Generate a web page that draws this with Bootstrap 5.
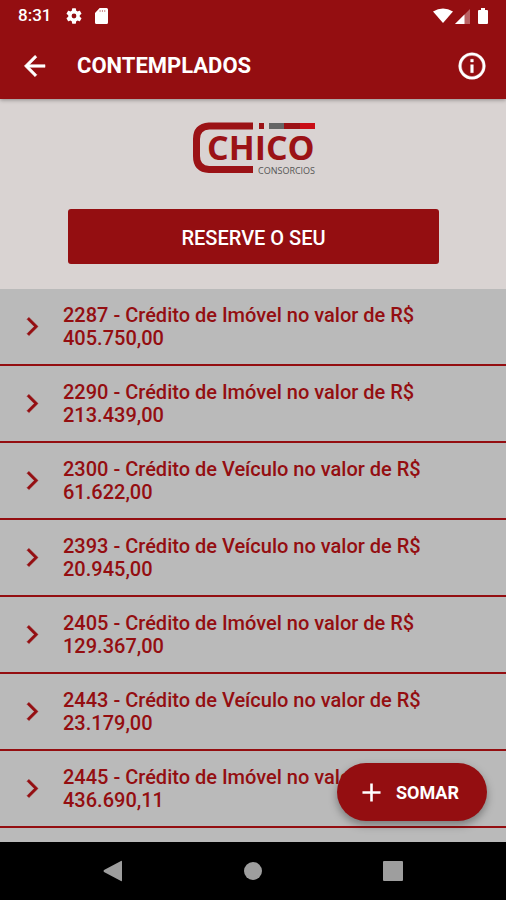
<!DOCTYPE html>
<html lang="pt-BR">
<head>
<meta charset="utf-8">
<meta name="viewport" content="width=device-width, initial-scale=1">
<title>Contemplados</title>
<link href="https://cdn.jsdelivr.net/npm/bootstrap@5.3.0/dist/css/bootstrap.min.css" rel="stylesheet">
<style>
  :root { --brand: #940e11; }
  body { font-family: Roboto, "Liberation Sans", sans-serif; background: #bababa; }
  svg { display: block; flex: none; }
  .app-header { background: var(--brand); color: #fff; box-shadow: 0 1px 4px rgba(0,0,0,.35); z-index: 1; }
  .status-bar { height: 32px; padding: 0 16px 0 18px; font-size: 17px; font-weight: 500; }
  .status-bar .system-icons { gap: 13px; margin-left: 15px; }
  .app-bar { height: 67px; padding: 0 18px 0 19px; }
  .app-bar h1 { font-size: 22px; line-height: 28px; font-weight: 700; margin-left: 26px; }
  .plain-btn { background: none; border: 0; color: inherit; padding: 0; }
  .hero { background: #d9d3d2; padding: 20px 67px 25px 68px; }
  .hero svg { margin-bottom: 33px; }
  .reserve-btn, .reserve-btn:hover { background: var(--brand); color: #fff; font-size: 20px; font-weight: 500; line-height: 24px; padding: 17px 16px 14px; border: 0; border-radius: 3px; }
  .list-group > .quota, .list-group > .quota:last-child { background: #bababa; color: var(--brand); font-size: 20px; font-weight: 500; line-height: 23px; padding: 15px 80px 14px 16px; gap: 16px; border: 0; border-bottom: 2px solid var(--brand); }
  .quota svg { stroke: currentColor; stroke-width: .5; margin-bottom: 2px; }
  .sum-btn, .sum-btn:hover { right: 19px; bottom: 21px; height: 58px; padding: 0 28px 0 19px; gap: 9px; background: var(--brand); color: #fff; font-size: 18px; font-weight: 700; border: 0; box-shadow: 0 4px 8px rgba(0,0,0,.35); }
  .system-nav { height: 58px; background: #000; color: #9e9e9e; padding: 0 42px; }
</style>
</head>
<body>
<div class="d-flex flex-column vh-100 overflow-hidden">
  <header class="app-header position-relative">
    <div class="status-bar d-flex align-items-center">
      <span>8:31</span>
      <div class="system-icons d-flex align-items-center">
        <svg width="16" height="16" viewBox="2 2 20 20" fill="currentColor" aria-hidden="true"><path d="M19.14 12.94c.04-.3.06-.61.06-.94s-.02-.64-.07-.94l2.03-1.58a.49.49 0 0 0 .12-.61l-1.92-3.32a.49.49 0 0 0-.59-.22l-2.39.96a7 7 0 0 0-1.62-.94l-.36-2.54A.48.48 0 0 0 13.92 2.4h-3.84a.48.48 0 0 0-.47.41l-.36 2.54c-.59.24-1.13.57-1.62.94l-2.39-.96a.48.48 0 0 0-.59.22L2.74 8.87a.48.48 0 0 0 .12.61l2.03 1.58c-.05.3-.09.63-.09.94s.02.64.07.94l-2.03 1.58a.49.49 0 0 0-.12.61l1.92 3.32c.12.22.37.29.59.22l2.39-.96c.5.38 1.03.7 1.62.94l.36 2.54c.05.24.24.41.48.41h3.84c.24 0 .44-.17.47-.41l.36-2.54a7 7 0 0 0 1.62-.94l2.39.96c.22.08.47 0 .59-.22l1.92-3.32a.48.48 0 0 0-.12-.61zM12 15a3 3 0 1 1 0-6 3 3 0 0 1 0 6z"/></svg>
        <svg width="13" height="16" viewBox="0 0 14 16" preserveAspectRatio="none" fill="currentColor" aria-hidden="true"><path d="M5 0h7.500a1.500 1.500 0 0 1 1.500 1.500v13a1.500 1.500 0 0 1-1.500 1.500h-11A1.500 1.500 0 0 1 0 14.500V5z"/><path d="M5.500 2v2M8 2v2M10.500 2v2" stroke="#940e11" stroke-opacity=".5"/></svg>
      </div>
      <svg class="ms-auto" width="58" height="18" viewBox="0 0 58 18" fill="currentColor" role="img" aria-label="Wi-Fi, sinal e bateria">
        <path d="M1 4.500Q11 -1.500 21 4.500L11 16z"/>
        <path d="M23 17 38 2v15z" opacity=".35"/><path d="M23 17 32.500 7.500V17z"/>
        <path d="M49 1h4v2h2a1 1 0 0 1 1 1v12a1 1 0 0 1-1 1h-8a1 1 0 0 1-1-1V4a1 1 0 0 1 1-1h2z"/>
      </svg>
    </div>
    <div class="app-bar d-flex align-items-center">
      <button type="button" class="plain-btn" aria-label="Voltar"><svg width="32" height="32" viewBox="0 0 24 24" fill="currentColor" stroke="currentColor" stroke-width=".4"><path d="M19.500 11H7.830l5.590-5.590L12 4l-8 8 8 8 1.410-1.410L7.830 13H19.500z"/></svg></button>
      <h1 class="mb-0">CONTEMPLADOS</h1>
      <button type="button" class="plain-btn ms-auto" aria-label="Informações"><svg width="32" height="32" viewBox="0 0 24 24" fill="currentColor" stroke="currentColor" stroke-width=".3"><path d="M11 7h2v2h-2zm0 4h2v6h-2zm1-9a10 10 0 1 0 0 20 10 10 0 0 0 0-20zm0 18a8 8 0 1 1 0-16 8 8 0 0 1 0 16z"/></svg></button>
    </div>
  </header>

  <section class="hero d-flex flex-column align-items-center">
    <svg width="125" height="57" viewBox="0 0 125 57" role="img" aria-label="Chico Consorcios">
      <path d="M62 7H18Q5.500 8 5.500 20V37Q5.500 50 18 50.500H62" fill="none" stroke="#9b1216" stroke-width="7"/>
      <path d="M68 4h5v6h-5z" fill="#9b1216"/>
      <path d="M78 4h15v6H78z" fill="#656565"/><path d="M93 4h16v6H93z" fill="#9b1216"/><path d="M109 4h15v6h-15z" fill="#c90d16"/>
      <text x="16" y="41" font-family="'Open Sans', sans-serif" font-size="34" font-weight="700" fill="#9b1216">CHICO</text>
      <text x="67" y="55" font-family="'Open Sans', sans-serif" font-size="9" fill="#555">CONSORCIOS</text>
    </svg>
    <button type="button" class="btn reserve-btn w-100">RESERVE O SEU</button>
  </section>

  <main class="flex-grow-1 position-relative overflow-hidden">
    <div class="list-group list-group-flush">
      <button type="button" class="quota list-group-item list-group-item-action d-flex align-items-center"><svg width="31" height="31" viewBox="0 0 24 24" fill="currentColor" aria-hidden="true"><path d="M10 5 8.590 6.410 14.170 12l-5.580 5.590L10 19l7-7z"/></svg><span>2287 - Crédito de Imóvel no valor de R$ 405.750,00</span></button>
      <button type="button" class="quota list-group-item list-group-item-action d-flex align-items-center"><svg width="31" height="31" viewBox="0 0 24 24" fill="currentColor" aria-hidden="true"><path d="M10 5 8.590 6.410 14.170 12l-5.580 5.590L10 19l7-7z"/></svg><span>2290 - Crédito de Imóvel no valor de R$ 213.439,00</span></button>
      <button type="button" class="quota list-group-item list-group-item-action d-flex align-items-center"><svg width="31" height="31" viewBox="0 0 24 24" fill="currentColor" aria-hidden="true"><path d="M10 5 8.590 6.410 14.170 12l-5.580 5.590L10 19l7-7z"/></svg><span>2300 - Crédito de Veículo no valor de R$ 61.622,00</span></button>
      <button type="button" class="quota list-group-item list-group-item-action d-flex align-items-center"><svg width="31" height="31" viewBox="0 0 24 24" fill="currentColor" aria-hidden="true"><path d="M10 5 8.590 6.410 14.170 12l-5.580 5.590L10 19l7-7z"/></svg><span>2393 - Crédito de Veículo no valor de R$ 20.945,00</span></button>
      <button type="button" class="quota list-group-item list-group-item-action d-flex align-items-center"><svg width="31" height="31" viewBox="0 0 24 24" fill="currentColor" aria-hidden="true"><path d="M10 5 8.590 6.410 14.170 12l-5.580 5.590L10 19l7-7z"/></svg><span>2405 - Crédito de Imóvel no valor de R$ 129.367,00</span></button>
      <button type="button" class="quota list-group-item list-group-item-action d-flex align-items-center"><svg width="31" height="31" viewBox="0 0 24 24" fill="currentColor" aria-hidden="true"><path d="M10 5 8.590 6.410 14.170 12l-5.580 5.590L10 19l7-7z"/></svg><span>2443 - Crédito de Veículo no valor de R$ 23.179,00</span></button>
      <button type="button" class="quota list-group-item list-group-item-action d-flex align-items-center"><svg width="31" height="31" viewBox="0 0 24 24" fill="currentColor" aria-hidden="true"><path d="M10 5 8.590 6.410 14.170 12l-5.580 5.590L10 19l7-7z"/></svg><span>2445 - Crédito de Imóvel no valor de R$ 436.690,11</span></button>
    </div>
    <button type="button" class="btn sum-btn rounded-pill position-absolute d-flex align-items-center"><svg width="31" height="31" viewBox="0 0 24 24" fill="currentColor" aria-hidden="true"><path d="M19 13h-6v6h-2v-6H5v-2h6V5h2v6h6z"/></svg>SOMAR</button>
  </main>

  <nav class="system-nav d-flex align-items-center justify-content-around" aria-label="Sistema">
    <button type="button" class="plain-btn" aria-label="Voltar"><svg width="20" height="22" viewBox="0 0 20 22" fill="currentColor"><path d="M18 1Q19 0 19 2V20Q19 22 18 21L1 12Q0 11 1 10z"/></svg></button>
    <button type="button" class="plain-btn" aria-label="Início"><svg width="18" height="18" viewBox="0 0 18 18" fill="currentColor"><circle cx="9" cy="9" r="9"/></svg></button>
    <button type="button" class="plain-btn" aria-label="Recentes"><svg width="20" height="20" viewBox="0 0 20 20" fill="currentColor"><rect width="20" height="20" rx="1"/></svg></button>
  </nav>
</div>
<script src="https://cdn.jsdelivr.net/npm/bootstrap@5.3.0/dist/js/bootstrap.bundle.min.js"></script>
</body>
</html>
